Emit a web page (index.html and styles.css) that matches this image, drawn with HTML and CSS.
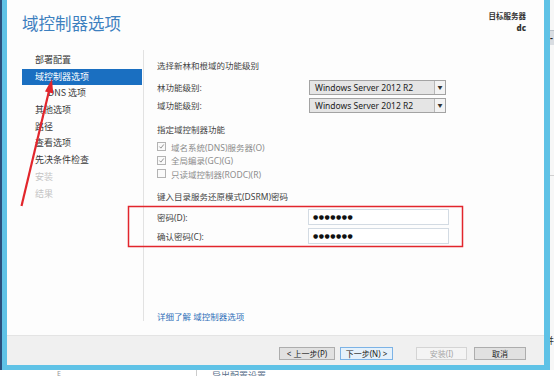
FILE: index.html
```html
<!DOCTYPE html>
<html lang="zh-CN">
<head>
    <meta charset="UTF-8">
    <meta name="viewport" content="width=device-width, initial-scale=1.0">
    <title>域控制器选项</title>
    <link rel="stylesheet" href="styles.css">
</head>
<body>
    <div class="desk">
        <div class="edge-left"></div>
        <div class="wizard">
            <div class="wiz-head">
                <h1>域控制器选项</h1>
                <div class="target">
                    <div>目标服务器</div>
                    <b>dc</b>
                </div>
            </div>
            <div class="wiz-body">
                <ul class="steps">
                    <li>部署配置</li>
                    <li class="active">域控制器选项</li>
                    <li class="sub">DNS 选项</li>
                    <li>其他选项</li>
                    <li>路径</li>
                    <li>查看选项</li>
                    <li>先决条件检查</li>
                    <li class="off">安装</li>
                    <li class="off">结果</li>
                </ul>
                <div class="page">
                    <div class="section">选择新林和根域的功能级别</div>
                    <div class="row">
                        <span class="label">林功能级别:</span>
                        <div class="combo"><span>Windows Server 2012 R2</span><i>▼</i></div>
                    </div>
                    <div class="row">
                        <span class="label">域功能级别:</span>
                        <div class="combo"><span>Windows Server 2012 R2</span><i>▼</i></div>
                    </div>

                    <div class="section second">指定域控制器功能</div>
                    <div class="checks">
                        <div class="check"><span class="box checked"><svg viewBox="0 0 9 9"><path d="M1.8 4.6 L3.7 6.6 L7.4 1.9" /></svg></span>域名系统(DNS)服务器(O)</div>
                        <div class="check"><span class="box checked"><svg viewBox="0 0 9 9"><path d="M1.8 4.6 L3.7 6.6 L7.4 1.9" /></svg></span>全局编录(GC)(G)</div>
                        <div class="check"><span class="box"></span>只读域控制器(RODC)(R)</div>
                    </div>

                    <div class="section third">键入目录服务还原模式(DSRM)密码</div>
                    <div class="pw-row">
                        <span class="label">密码(D):</span>
                        <div class="pw">●●●●●●●</div>
                    </div>
                    <div class="pw-row">
                        <span class="label">确认密码(C):</span>
                        <div class="pw">●●●●●●●</div>
                    </div>

                    <a class="more" href="#">详细了解 域控制器选项</a>
                </div>
            </div>
            <div class="wiz-foot">
                <button class="btn prev">&lt; 上一步(P)</button>
                <button class="btn next">下一步(N) &gt;</button>
                <button class="btn install" disabled>安装(I)</button>
                <button class="btn cancel">取消</button>
            </div>
        </div>
        <div class="edge-right">
            <div class="strip-bar">-</div>
            <div class="strip-line"></div>
            <div class="strip-char">并</div>
        </div>
    </div>
    <div class="below">
        <span class="below-mark">E</span>
        <span class="below-line"></span>
        <span class="below-text">导出配置设置</span>
    </div>

    <!-- 标注: 红色箭头和红框 -->
    <svg class="annot" width="554" height="376" viewBox="0 0 554 376">
        <line x1="21.5" y1="206" x2="49" y2="91" stroke="#e2262c" stroke-width="2.2" />
        <polygon points="52,79 53.2,93.4 45,91.4" fill="#e2262c" />
        <rect x="128.5" y="206.5" width="334" height="40" fill="none" stroke="#e2262c" stroke-width="1.5" />
    </svg>
</body>
</html>
```

FILE: styles.css
```css
body {
    margin: 0;
    padding: 0;
    width: 554px;
    height: 376px;
    overflow: hidden;
    position: relative;
    background-color: #ffffff;
    font-family: "Noto Sans", "Noto Sans CJK SC", sans-serif;
    font-size: 8.5px;
    color: #333333;
}
.desk {
    display: flex;
    height: 370px;
}
.edge-left {
    width: 2px;
    background-color: #2b4f7c;
}
.wizard {
    width: 537px;
    display: flex;
    flex-direction: column;
    background-color: #fdfdfd;
    border-left: 5px solid #5fc2e6;
    border-right: 6px solid #5fc2e6;
    border-bottom: 5px solid #5fc2e6;
}
.wiz-head {
    height: 50px;
    display: flex;
    justify-content: space-between;
    align-items: flex-start;
}
.wiz-head h1 {
    margin: 13px 0 0 15px;
    font-family: "Noto Sans CJK SC", sans-serif;
    font-size: 16.5px;
    line-height: 20px;
    font-weight: normal;
    color: #3d80bf;
}
.target {
    margin: 11px 18px 0 0;
    text-align: right;
    font-size: 7.5px;
    line-height: 11px;
    font-weight: bold;
    color: #333;
}
.target b {
    font-size: 8px;
}
.wiz-body {
    flex: 1;
    display: flex;
    align-items: flex-start;
}
.steps {
    list-style-type: none;
    margin: 0;
    padding: 2px 1px 0 0;
    width: 135px;
    height: 269px;
    border-right: 1px solid #e2e2e2;
}
.steps li {
    margin-left: 15px;
    padding-left: 13px;
    height: 16.7px;
    line-height: 16.7px;
    font-family: "Noto Sans CJK SC", sans-serif;
    font-size: 9px;
    color: #3a3a3a;
}
.steps li.active {
    background-color: #1a6fc1;
    color: #ffffff;
}
.steps li.sub {
    padding-left: 26px;
}
.steps li.off {
    color: #c4c4c4;
}
.page {
    flex: 1;
    align-self: stretch;
    display: flex;
    flex-direction: column;
    padding: 10px 0 12px 13px;
}
.section {
    height: 12px;
    line-height: 12px;
    color: #444;
}
.section.second {
    margin-top: 10px;
}
.section.third {
    margin-top: 10.5px;
}
.row {
    display: flex;
    align-items: center;
    height: 18px;
}
.row:first-of-type,
.section + .row {
    margin-top: 6px;
}
.label {
    width: 152px;
    color: #444;
}
.combo {
    width: 135px;
    height: 13px;
    display: flex;
    align-items: center;
    background-color: #e5e5e5;
    border: 1px solid #a3a3a3;
    font-size: 8.5px;
    color: #222;
}
.combo span {
    flex: 1;
    padding-left: 5px;
    line-height: 13px;
}
.combo i {
    width: 10px;
    height: 13px;
    line-height: 13px;
    font-style: normal;
    font-size: 5px;
    text-align: center;
    background-color: #f3f3f3;
    border-left: 1px solid #b8b8b8;
    color: #333;
}
.checks {
    margin-top: 4px;
}
.check {
    display: flex;
    align-items: center;
    height: 13.5px;
    color: #8c8c8c;
}
.box {
    width: 7px;
    height: 7px;
    margin-right: 5px;
    border: 1px solid #b3b3b3;
    background-color: #fafafa;
    display: flex;
}
.box svg {
    width: 7px;
    height: 7px;
    fill: none;
    stroke: #8a8a8a;
    stroke-width: 1.2;
}
.pw-row {
    display: flex;
    align-items: center;
    height: 19px;
}
.section.third + .pw-row {
    margin-top: 4.5px;
}
.pw {
    margin-left: -1px;
    width: 135px;
    height: 14px;
    line-height: 14px;
    padding-left: 4px;
    background-color: #ffffff;
    border: 1px solid #d3dbe3;
    font-family: "DejaVu Sans", sans-serif;
    font-size: 6px;
    letter-spacing: 0.5px;
    color: #111;
}
.more {
    margin-top: auto;
    height: 12px;
    line-height: 12px;
    color: #2f6fb8;
    text-decoration: none;
}
.wiz-foot {
    height: 29px;
    display: flex;
    justify-content: flex-end;
    align-items: flex-start;
    padding: 11px 18px 0 0;
    box-sizing: border-box;
    height: 30px;
    background-color: #f0f0f0;
    border-top: 1px solid #e4e4e4;
}
.btn {
    height: 13px;
    padding: 0;
    font-family: "Noto Sans", "Noto Sans CJK SC", sans-serif;
    font-size: 8px;
    line-height: 11px;
    color: #222;
    background-color: #e1e1e1;
    border: 1px solid #adadad;
}
.btn.prev {
    width: 56px;
}
.btn.next {
    width: 53px;
    margin-left: 5px;
    background-color: #e5f1fb;
    border-color: #7cb3e6;
}
.btn.install {
    width: 51px;
    margin-left: 23px;
    color: #a6a6a6;
    background-color: #f4f4f4;
    border-color: #d4d4d4;
}
.btn.cancel {
    width: 52px;
    margin-left: 7px;
}
.edge-right {
    flex: 1;
    display: flex;
    flex-direction: column;
    overflow: hidden;
    background-color: #f7f7f7;
}
.strip-bar {
    margin-top: 30px;
    height: 14px;
    line-height: 13px;
    background-color: #d9dde2;
    font-weight: bold;
    font-size: 9px;
    color: #222;
    border-top: 1px solid #b9c0c8;
}
.strip-line {
    margin-top: 130px;
    height: 1px;
    background-color: #d0d0d0;
}
.strip-char {
    margin-top: 158px;
    margin-left: -5px;
    font-family: "Noto Sans CJK SC", sans-serif;
    font-size: 9px;
    color: #333;
}
.below {
    height: 6px;
    display: flex;
    overflow: hidden;
    align-items: flex-start;
}
.below-mark {
    margin-left: 57px;
    font-size: 7px;
    line-height: 7px;
    color: #999;
}
.below-line {
    margin-left: 135px;
    width: 1px;
    height: 6px;
    background-color: #cccccc;
}
.below-text {
    margin-left: 15px;
    margin-top: 1px;
    font-family: "Noto Sans CJK SC", sans-serif;
    font-size: 9px;
    line-height: 9px;
    color: #5a6f8a;
}
.annot {
    position: absolute;
    left: 0;
    top: 0;
    pointer-events: none;
}
```
